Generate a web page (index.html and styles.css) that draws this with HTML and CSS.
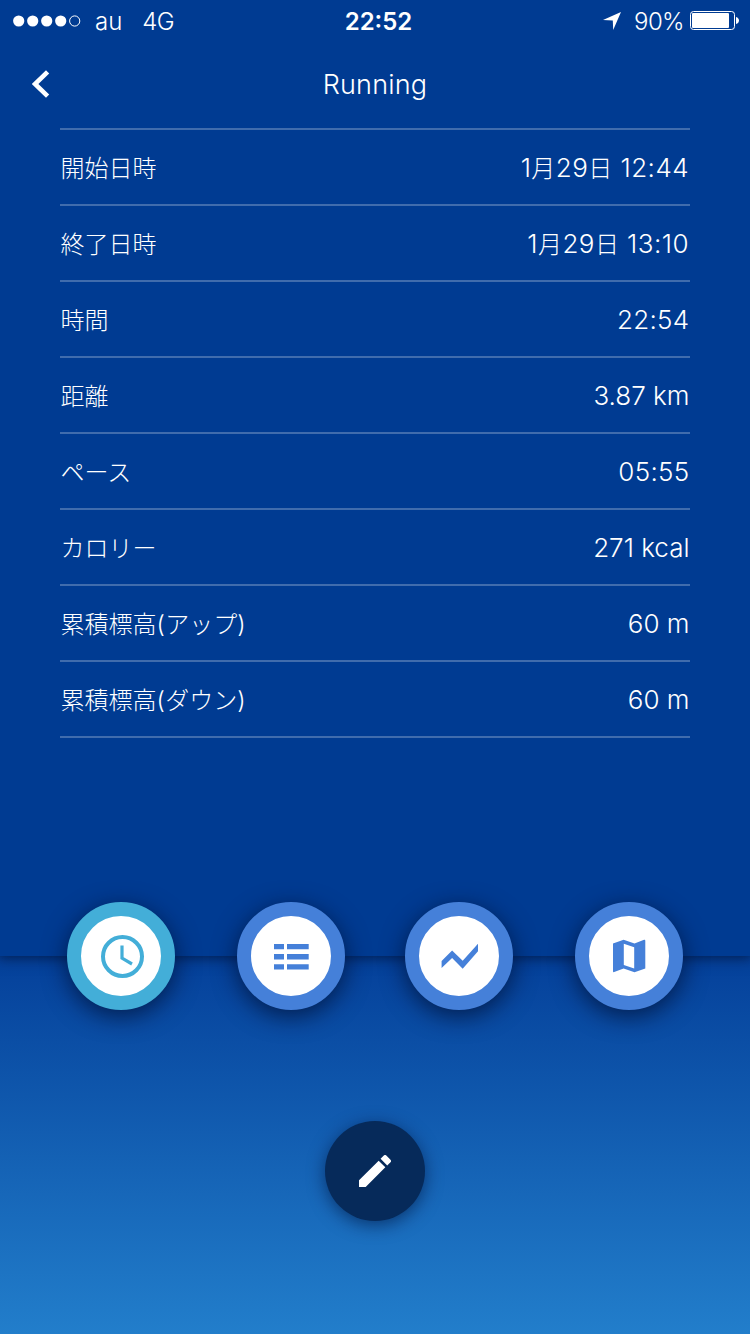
FILE: index.html
```html
<!DOCTYPE html>
<html lang="ja">
<head>
<meta charset="utf-8">
<title>Running</title>
<link rel="stylesheet" href="styles.css">
</head>
<body>
<main class="screen">
  <section class="panel">
    <div class="status">
      <div class="carrier">
        <svg class="signal" width="68" height="12" viewBox="0 0 68 12"><g fill="#fff"><circle cx="5.7" cy="6" r="5.6"/><circle cx="19.7" cy="6" r="5.6"/><circle cx="33.7" cy="6" r="5.6"/><circle cx="47.7" cy="6" r="5.6"/></g><circle cx="61.7" cy="6" r="5.1" fill="none" stroke="#fff"/></svg>
        <span class="network-name">au</span>
        <span class="network-type">4G</span>
      </div>
      <div class="clock">22:52</div>
      <div class="power">
        <svg class="location" width="18" height="18" viewBox="0 0 18 18"><path d="M18 0L10.2 18L9.8 8.4L0 8.1Z" fill="#fff"/></svg>
        <span class="percent">90%</span>
        <svg class="battery" width="49" height="19" viewBox="0 0 49 19"><rect x=".5" y=".5" width="44" height="18" rx="3" fill="none" stroke="#fff"/><rect x="2" y="2" width="37" height="15" rx="1" fill="#fff"/><path d="M46 6c4 1 4 6 0 7z" fill="#fff"/></svg>
      </div>
    </div>
    <header class="header">
      <svg class="back" width="18" height="28" viewBox="0 0 18 28"><path d="M15.6 1.8L3 14L15.6 26.2" fill="none" stroke="#fff" stroke-width="4.6"/></svg>
      <h1 class="title">Running</h1>
    </header>
    <dl class="details">
      <div class="row"><dt>開始日時</dt><dd class="date">1<i>月</i>29<i>日</i> 12:44</dd></div>
      <div class="row"><dt>終了日時</dt><dd class="date">1<i>月</i>29<i>日</i> 13:10</dd></div>
      <div class="row"><dt>時間</dt><dd class="time">22:54</dd></div>
      <div class="row"><dt>距離</dt><dd>3.87 km</dd></div>
      <div class="row"><dt>ペース</dt><dd class="time">05:55</dd></div>
      <div class="row"><dt>カロリー</dt><dd>271 kcal</dd></div>
      <div class="row"><dt>累積標高<b>(</b>アップ<b>)</b></dt><dd>60 m</dd></div>
      <div class="row"><dt>累積標高<b>(</b>ダウン<b>)</b></dt><dd>60 m</dd></div>
    </dl>
  </section>
  <nav class="tabs">
    <button class="tab tab-active" aria-label="時間"><svg width="80" height="80" viewBox="0 0 80 80"><g fill="none" stroke="#43aed8"><circle cx="41.5" cy="40.5" r="19.5" stroke-width="4"/><path d="M41 29.5V42.2L51 48" stroke-width="3.2"/></g></svg></button>
    <button class="tab" aria-label="一覧"><svg width="80" height="80" viewBox="0 0 80 80"><path d="M23 28h10v5.3H23zM36 28h21.7v5.3H36zM23 38.1h10v5.3H23zM36 38.1h21.7v5.3H36zM23 48.2h10v5.3H23zM36 48.2h21.7v5.3H36z" fill="#4580d9"/></svg></button>
    <button class="tab" aria-label="グラフ"><svg width="80" height="80" viewBox="0 0 80 80"><path d="M22.6 44.9L33.1 34.6L43.7 44.7L59 27.8V35.2L43.7 52.7L33.1 42L22.6 52.1Z" fill="#4580d9"/></svg></button>
    <button class="tab" aria-label="地図"><svg width="80" height="80" viewBox="0 0 80 80"><path d="M24 27.4L34.6 23.8L45.5 27.6L55.1 23.8Q56.3 23.4 56.3 24.8V52.4L45.5 56.2L34.6 52.4L25.2 56.1Q24 56.5 24 55.2ZM34.8 27.8V48.9L45.2 52.4V31.2Z" fill="#4580d9" fill-rule="evenodd"/></svg></button>
  </nav>
  <div class="actions">
    <button class="edit" aria-label="編集"><svg width="32" height="32" viewBox="3 2.99 18 18.01"><path d="M3 17.25V21h3.75L17.81 9.94l-3.75-3.75L3 17.25zM20.71 7.04a1 1 0 0 0 0-1.41l-2.34-2.34a1 1 0 0 0-1.41 0l-1.83 1.83 3.75 3.75 1.83-1.83z" fill="#fff"/></svg></button>
  </div>
</main>
</body>
</html>
```
FILE: styles.css
```css
* { box-sizing: border-box; }
body { margin: 0; }
.screen {
  width: 750px;
  height: 1334px;
  overflow: hidden;
  color: #fff;
  font-family: Inter, "Noto Sans CJK JP", sans-serif;
  background: linear-gradient(#04409a 956px, #227ecb 1334px);
}
.panel {
  height: 956px;
  background: #003b92;
  box-shadow: 0 0 12px 2px rgba(0, 15, 50, .7);
}
.status {
  display: grid;
  grid-template-columns: 1fr auto 1fr;
  align-items: center;
  height: 40px;
  padding: 1px 11px 0 13px;
  font-size: 24px;
}
.carrier, .power { display: flex; align-items: center; }
.power { justify-content: flex-end; }
.network-name { margin-left: 14px; padding-top: 1px; font-weight: 350; }
.network-type { margin-left: 20px; padding-top: 1px; font-weight: 350; letter-spacing: -.6px; }
.clock { padding: 1px 0 0 5px; font-weight: 600; }
.location { margin-right: 13px; }
.percent { margin-right: 6px; padding-top: 1px; font-weight: 350; letter-spacing: -.6px; }
.header {
  display: grid;
  grid-template-columns: 60px 1fr 60px;
  align-items: center;
  height: 88px;
}
.back { margin-left: 32px; }
.title {
  margin: 0;
  text-align: center;
  font-size: 27px;
  font-weight: 350;
  letter-spacing: .2px;
}
.details {
  margin: 0 60px;
  border-top: 2px solid #406cad;
}
.row {
  display: flex;
  justify-content: space-between;
  align-items: center;
  height: 76px;
  border-bottom: 2px solid #406cad;
}
.row dt {
  padding-left: .5px;
  font-family: "Noto Sans CJK JP", sans-serif;
  font-size: 24px;
  font-weight: 300;
  line-height: 36px;
}
.row dt b {
  font-family: Inter, sans-serif;
  font-weight: 300;
  line-height: 0;
  letter-spacing: .5px;
}
.row dd {
  margin: 0;
  padding: 2px .5px 0 0;
  font-size: 26px;
  font-weight: 350;
  line-height: 36px;
  white-space: nowrap;
}
.row .time { letter-spacing: .3px; }
.row .date { padding-right: 1px; letter-spacing: .45px; }
.row i { font-size: 24px; font-style: normal; font-weight: 300; }
.tabs {
  position: relative;
  display: grid;
  grid-template-columns: 170px 168px 170px 108px;
  height: 108px;
  margin: -54px 0 0 67px;
}
.tab {
  width: 108px;
  height: 108px;
  padding: 0;
  border: 14px solid #4580d9;
  border-radius: 50%;
  background: #fff;
  box-shadow: 0 6px 24px rgba(0, 15, 50, .75);
}
.tab svg, .edit svg { display: block; }
.tab-active { border-color: #43aed8; }
.actions {
  display: flex;
  justify-content: center;
  padding-top: 111px;
}
.edit {
  display: grid;
  place-items: center;
  width: 100px;
  height: 100px;
  padding: 0;
  border: 0;
  border-radius: 50%;
  background: #062a5a;
  box-shadow: 0 4px 17px rgba(0, 20, 60, .6);
}
```
